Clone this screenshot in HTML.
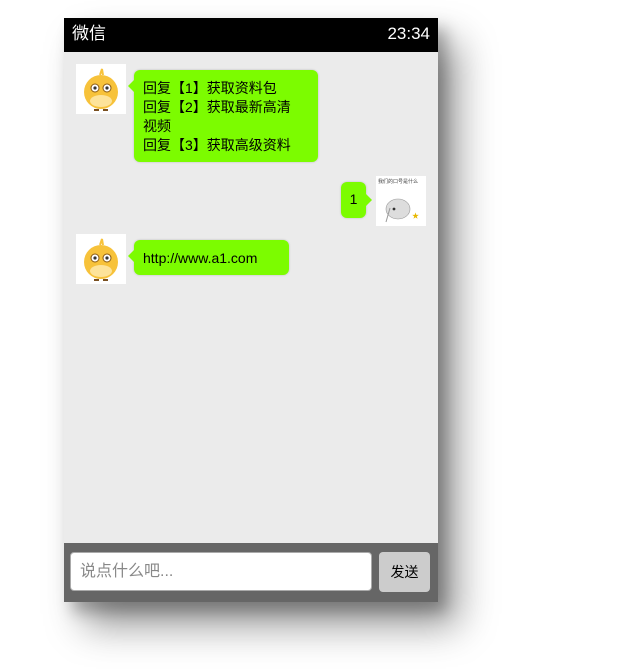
<!DOCTYPE html>
<html><head><meta charset="utf-8">
<style>
*{margin:0;padding:0;box-sizing:border-box}
body{width:633px;height:669px;background:#fff;font-family:"Liberation Sans","Noto Sans CJK SC",sans-serif;position:relative;overflow:hidden}
.phone{position:absolute;left:64px;top:18px;width:374px;height:584px;background:#ebebeb;box-shadow:20px 24px 36px rgba(0,0,0,.4),8px 10px 14px rgba(0,0,0,.25)}
.hd{height:34px;background:#000;color:#fff;font-size:17px;line-height:32px;padding:0 8px;display:flex;justify-content:space-between}
.av{position:absolute;width:50px;height:50px;background:#fff}
.b{position:absolute;background:#7cfc00;border-radius:6px;font-size:14px;line-height:19px;padding:9px 9px 7px;color:#000;box-shadow:0 0 2px rgba(0,0,0,.2);white-space:nowrap}
.b.l:before{content:"";position:absolute;left:-6px;top:10px;border:6px solid transparent;border-left:0;border-right-color:#7cfc00}
.b.r:after{content:"";position:absolute;right:-6px;top:12px;border:6px solid transparent;border-right:0;border-left-color:#7cfc00}
.ft{position:absolute;left:0;bottom:0;width:374px;height:59px;background:#666}
.in{position:absolute;left:6px;top:9px;width:302px;height:39px;background:#fff;border-radius:4px;border:1px solid #aaa;color:#888;font-size:16px;line-height:37px;padding-left:9px}
.bt{position:absolute;left:315px;top:9px;width:51px;height:40px;background:#ccc;border-radius:4px;font-size:14px;line-height:40px;text-align:center;color:#000}
</style></head><body>
<div class="phone">
<div class="hd"><span>微信</span><span>23:34</span></div>
<svg class="av" style="left:12px;top:46px" viewBox="0 0 50 50"><ellipse cx="25" cy="28" rx="17" ry="17" fill="#f7c23a"/><ellipse cx="25" cy="37" rx="11" ry="6" fill="#fde39a"/><path d="M24 11l2-6 1 6" stroke="#f7c23a" stroke-width="2" fill="none"/><circle cx="19" cy="24" r="4" fill="#fff" stroke="#8a5a10"/><circle cx="31" cy="24" r="4" fill="#fff" stroke="#8a5a10"/><circle cx="19" cy="24" r="1.6" fill="#333"/><circle cx="31" cy="24" r="1.6" fill="#333"/><path d="M18 46h5M27 46h5" stroke="#7a5020" stroke-width="2"/></svg>
<div class="b l" style="left:70px;top:52px;width:184px">回复【1】获取资料包<br>回复【2】获取最新高清<br>视频<br>回复【3】获取高级资料</div>
<div class="b r" style="left:277px;top:164px;width:25px;height:36px;padding:8px 0;text-align:center">1</div>
<svg class="av" style="left:312px;top:158px" viewBox="0 0 50 50"><text x="2" y="7" font-size="5" fill="#444" font-family="Noto Sans CJK SC,sans-serif">我们的口号是什么</text><ellipse cx="22" cy="33" rx="12" ry="10" fill="#ddd" stroke="#999" stroke-width=".6"/><circle cx="18" cy="33" r="1.4" fill="#333"/><path d="M10 46l4-14" stroke="#999"/><text x="36" y="42" font-size="7" fill="#e8b800">★</text></svg>
<svg class="av" style="left:12px;top:216px" viewBox="0 0 50 50"><ellipse cx="25" cy="28" rx="17" ry="17" fill="#f7c23a"/><ellipse cx="25" cy="37" rx="11" ry="6" fill="#fde39a"/><path d="M24 11l2-6 1 6" stroke="#f7c23a" stroke-width="2" fill="none"/><circle cx="19" cy="24" r="4" fill="#fff" stroke="#8a5a10"/><circle cx="31" cy="24" r="4" fill="#fff" stroke="#8a5a10"/><circle cx="19" cy="24" r="1.6" fill="#333"/><circle cx="31" cy="24" r="1.6" fill="#333"/><path d="M18 46h5M27 46h5" stroke="#7a5020" stroke-width="2"/></svg>
<div class="b l" style="left:70px;top:222px;width:155px">http://www.a1.com</div>
<div class="ft"><div class="in">说点什么吧...</div><div class="bt">发送</div></div>
</div>
</body></html>
